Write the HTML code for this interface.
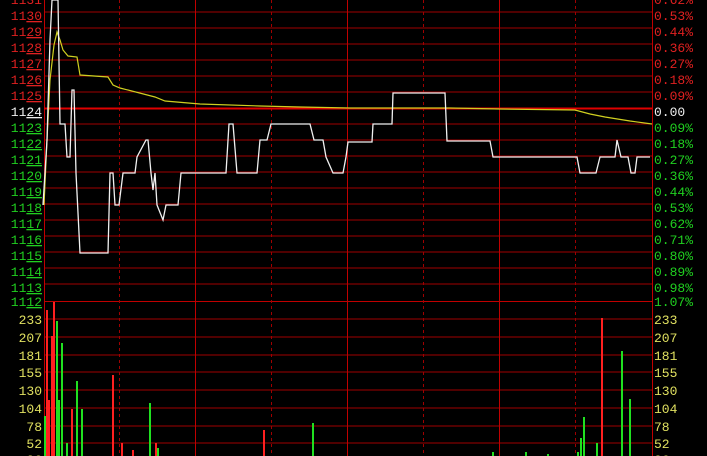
<!DOCTYPE html>
<html><head><meta charset="utf-8"><style>
html,body{margin:0;padding:0;background:#000;width:707px;height:456px;overflow:hidden}
svg{display:block}
text{font-family:"Liberation Mono","DejaVu Sans Mono",monospace;font-size:13px}
</style></head><body>
<svg width="707" height="456" xmlns="http://www.w3.org/2000/svg">
<g stroke="#a00000" stroke-width="1">
<line x1="44" y1="12" x2="652" y2="12"/><line x1="44" y1="28" x2="652" y2="28"/><line x1="44" y1="44" x2="652" y2="44"/><line x1="44" y1="60" x2="652" y2="60"/><line x1="44" y1="76" x2="652" y2="76"/><line x1="44" y1="92" x2="652" y2="92"/>
<line x1="44" y1="124" x2="652" y2="124"/><line x1="44" y1="140" x2="652" y2="140"/><line x1="44" y1="156" x2="652" y2="156"/><line x1="44" y1="172" x2="652" y2="172"/><line x1="44" y1="188" x2="652" y2="188"/><line x1="44" y1="204" x2="652" y2="204"/><line x1="44" y1="220" x2="652" y2="220"/><line x1="44" y1="236" x2="652" y2="236"/><line x1="44" y1="252" x2="652" y2="252"/><line x1="44" y1="268" x2="652" y2="268"/><line x1="44" y1="284" x2="652" y2="284"/>
<line x1="44" y1="319" x2="652" y2="319"/><line x1="44" y1="337" x2="652" y2="337"/><line x1="44" y1="355" x2="652" y2="355"/><line x1="44" y1="372" x2="652" y2="372"/><line x1="44" y1="390" x2="652" y2="390"/><line x1="44" y1="408" x2="652" y2="408"/><line x1="44" y1="426" x2="652" y2="426"/><line x1="44" y1="443" x2="652" y2="443"/>
</g>
<g stroke="#c00000" stroke-width="1">
<line x1="44.5" y1="0" x2="44.5" y2="456"/><line x1="652.5" y1="0" x2="652.5" y2="456"/>
<line x1="195.5" y1="0" x2="195.5" y2="456"/><line x1="347.5" y1="0" x2="347.5" y2="456"/><line x1="499.5" y1="0" x2="499.5" y2="456"/>
<line x1="44" y1="301.5" x2="652" y2="301.5"/>
</g>
<g stroke="#a00000" stroke-width="1" stroke-dasharray="3,3">
<line x1="119.5" y1="0" x2="119.5" y2="456"/><line x1="271.5" y1="0" x2="271.5" y2="456"/><line x1="423.5" y1="0" x2="423.5" y2="456"/><line x1="575.5" y1="0" x2="575.5" y2="456"/>
</g>
<line x1="44" y1="108.5" x2="652" y2="108.5" stroke="#e00000" stroke-width="2"/>
<!-- volume bars -->
<g stroke-width="2">
<g stroke="#ff2020">
<line x1="47" y1="310" x2="47" y2="456"/><line x1="49" y1="400" x2="49" y2="456"/><line x1="52" y1="336" x2="52" y2="456"/><line x1="54" y1="302" x2="54" y2="456"/><line x1="72" y1="409" x2="72" y2="456"/><line x1="113" y1="375" x2="113" y2="456"/><line x1="122" y1="443" x2="122" y2="456"/><line x1="133" y1="450" x2="133" y2="456"/><line x1="156" y1="443" x2="156" y2="456"/><line x1="264" y1="430" x2="264" y2="456"/><line x1="602" y1="318" x2="602" y2="456"/>
</g>
<g stroke="#20e020">
<line x1="45" y1="416" x2="45" y2="456"/><line x1="57" y1="321" x2="57" y2="456"/><line x1="59" y1="400" x2="59" y2="456"/><line x1="62" y1="343" x2="62" y2="456"/><line x1="67" y1="443" x2="67" y2="456"/><line x1="77" y1="381" x2="77" y2="456"/><line x1="82" y1="409" x2="82" y2="456"/><line x1="150" y1="403" x2="150" y2="456"/><line x1="158" y1="448" x2="158" y2="456"/><line x1="313" y1="423" x2="313" y2="456"/><line x1="493" y1="452" x2="493" y2="456"/><line x1="526" y1="452" x2="526" y2="456"/><line x1="548" y1="454" x2="548" y2="456"/><line x1="578" y1="452" x2="578" y2="456"/><line x1="581" y1="438" x2="581" y2="456"/><line x1="584" y1="417" x2="584" y2="456"/><line x1="597" y1="443" x2="597" y2="456"/><line x1="622" y1="351" x2="622" y2="456"/><line x1="630" y1="399" x2="630" y2="456"/>
</g></g>
<!-- avg line -->
<polyline fill="none" stroke="#d0d020" stroke-width="1.2" points="44,205 47,140 50,80 54,45 57,32 60,40 63,50 68,56 77,57 80,75 108,77 113,85 120,88 155,97 165,101 200,104 260,106 300,107 350,108 450,108 500,109 575,110 590,114 605,117 630,121 652,124"/>
<!-- price line -->
<polyline fill="none" stroke="#f0f0f0" stroke-width="1.3" points="43,205 47,140 50,40 52,0 58,0 60,124 65,124 67,157 70,157 72,90 74,90 76,173 80,253 83,253 108,253 110,173 113,173 115,205 119,205 123,173 135,173 137,157 146,140 148,140 151,173 153,190 155,173 157,205 163,220 166,205 178,205 181,173 226,173 229,124 233,124 237,173 257,173 260,140 267,140 271,124 310,124 314,140 323,140 326,157 333,173 343,173 346,157 348,142 372,142 373,124 392,124 393,93 445,93 447,141 490,141 493,157 577,157 580,173 596,173 600,157 615,157 617,140 621,157 628,157 631,173 635,173 637,157 650,157"/>
<!-- left labels -->
<g text-anchor="end">
<text x="42" y="4" fill="#e02020">1131</text>
<text x="42" y="20" fill="#e02020">11<tspan text-decoration="underline">30</tspan></text>
<text x="42" y="36" fill="#e02020">11<tspan text-decoration="underline">29</tspan></text>
<text x="42" y="52" fill="#e02020">11<tspan text-decoration="underline">28</tspan></text>
<text x="42" y="68" fill="#e02020">11<tspan text-decoration="underline">27</tspan></text>
<text x="42" y="84" fill="#e02020">11<tspan text-decoration="underline">26</tspan></text>
<text x="42" y="100" fill="#e02020">11<tspan text-decoration="underline">25</tspan></text>
<text x="42" y="116" fill="#f0f0f0">11<tspan text-decoration="underline">24</tspan></text>
<text x="42" y="132" fill="#20d020">11<tspan text-decoration="underline">23</tspan></text>
<text x="42" y="148" fill="#20d020">11<tspan text-decoration="underline">22</tspan></text>
<text x="42" y="164" fill="#20d020">11<tspan text-decoration="underline">21</tspan></text>
<text x="42" y="180" fill="#20d020">11<tspan text-decoration="underline">20</tspan></text>
<text x="42" y="196" fill="#20d020">11<tspan text-decoration="underline">19</tspan></text>
<text x="42" y="212" fill="#20d020">11<tspan text-decoration="underline">18</tspan></text>
<text x="42" y="228" fill="#20d020">11<tspan text-decoration="underline">17</tspan></text>
<text x="42" y="244" fill="#20d020">11<tspan text-decoration="underline">16</tspan></text>
<text x="42" y="260" fill="#20d020">11<tspan text-decoration="underline">15</tspan></text>
<text x="42" y="276" fill="#20d020">11<tspan text-decoration="underline">14</tspan></text>
<text x="42" y="292" fill="#20d020">11<tspan text-decoration="underline">13</tspan></text>
<text x="42" y="306" fill="#20d020">11<tspan text-decoration="underline">12</tspan></text>
</g>
<g text-anchor="end" fill="#e0e060">
<text x="42" y="324">233</text><text x="42" y="342">207</text><text x="42" y="360">181</text><text x="42" y="377">155</text><text x="42" y="395">130</text><text x="42" y="413">104</text><text x="42" y="431">78</text><text x="42" y="448">52</text><text x="42" y="464">26</text>
</g>
<!-- right labels -->
<g>
<text x="654" y="4" fill="#e02020">0.62%</text>
<text x="654" y="20" fill="#e02020">0.53%</text>
<text x="654" y="36" fill="#e02020">0.44%</text>
<text x="654" y="52" fill="#e02020">0.36%</text>
<text x="654" y="68" fill="#e02020">0.27%</text>
<text x="654" y="84" fill="#e02020">0.18%</text>
<text x="654" y="100" fill="#e02020">0.09%</text>
<text x="654" y="116" fill="#f0f0f0">0.00</text>
<text x="654" y="132" fill="#20d020">0.09%</text>
<text x="654" y="148" fill="#20d020">0.18%</text>
<text x="654" y="164" fill="#20d020">0.27%</text>
<text x="654" y="180" fill="#20d020">0.36%</text>
<text x="654" y="196" fill="#20d020">0.44%</text>
<text x="654" y="212" fill="#20d020">0.53%</text>
<text x="654" y="228" fill="#20d020">0.62%</text>
<text x="654" y="244" fill="#20d020">0.71%</text>
<text x="654" y="260" fill="#20d020">0.80%</text>
<text x="654" y="276" fill="#20d020">0.89%</text>
<text x="654" y="292" fill="#20d020">0.98%</text>
<text x="654" y="306" fill="#20d020">1.07%</text>
</g>
<g fill="#e0e060">
<text x="654" y="324">233</text><text x="654" y="342">207</text><text x="654" y="360">181</text><text x="654" y="377">155</text><text x="654" y="395">130</text><text x="654" y="413">104</text><text x="654" y="431">78</text><text x="654" y="448">52</text><text x="654" y="464">26</text>
</g>
</svg>
</body></html>
